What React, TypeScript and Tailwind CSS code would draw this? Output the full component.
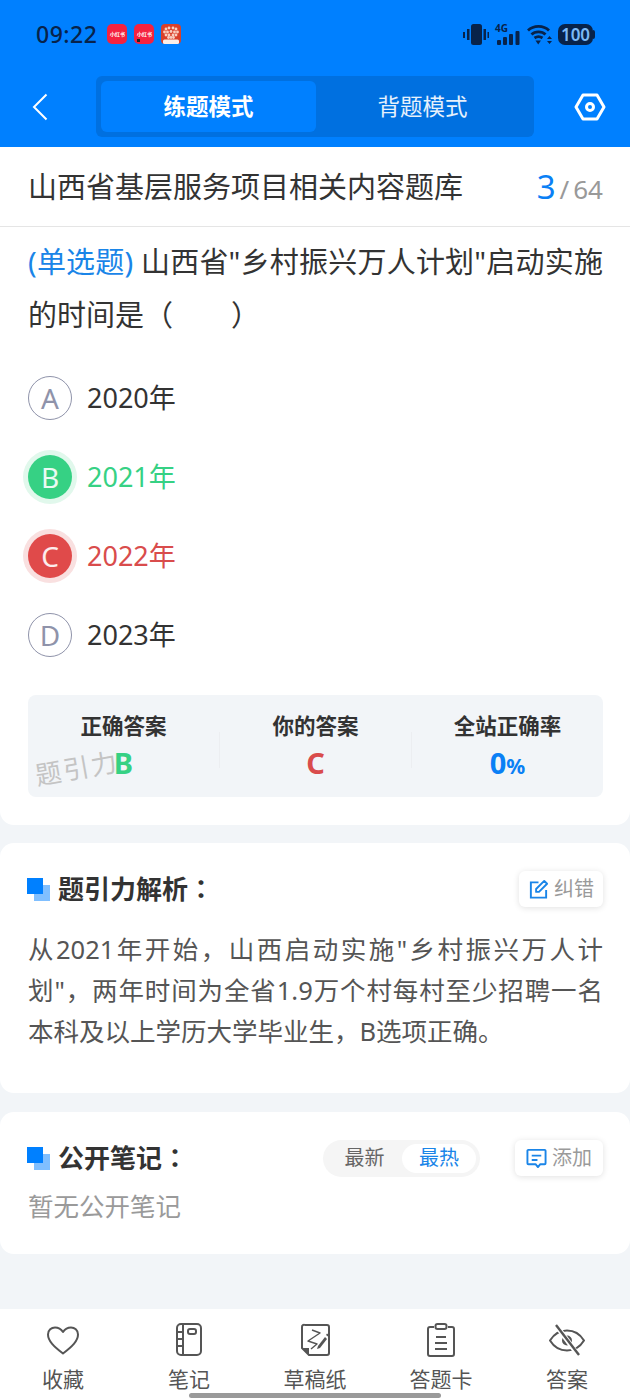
const FONT = "font-['Noto_Sans','Noto_Sans_CJK_SC',sans-serif]";

const OPTIONS = [
  { key: "A", text: "2020年", state: "normal" },
  { key: "B", text: "2021年", state: "right" },
  { key: "C", text: "2022年", state: "wrong" },
  { key: "D", text: "2023年", state: "normal" },
];

// dots of the little heart app icon
const HEART_DOTS = [
  [5, 5], [8, 4], [12, 4], [15, 5],
  [3.500, 8], [6.500, 8], [10, 7.500], [13.500, 8], [16.500, 8],
  [5, 11], [8, 11], [12, 11], [15, 11],
  [7.500, 13.500], [10, 13.500], [12.500, 13.500],
];

function StatusBar() {
  return (
    <div className="h-[68px] flex items-center pl-[36px] pr-[35px] text-[#08234a]">
      <span className="text-[23px] font-medium leading-none tracking-[0.5px]">09:22</span>
      <div className="ml-[10px] flex gap-[7px]">
        <div className="w-[20px] h-[20px] rounded-[5px] bg-[#f5223f] flex items-center justify-center">
          <span className="text-[5px] font-bold leading-none text-white whitespace-nowrap">小红书</span>
        </div>
        <div className="relative w-[20px] h-[20px] rounded-[5px] bg-[#f5223f] flex items-center justify-center">
          <span className="text-[5px] font-bold leading-none text-white whitespace-nowrap">小红书</span>
          <span className="absolute left-[3px] bottom-[2px] w-[3px] h-[3px] bg-[#222]" />
        </div>
        <svg width="20" height="20" viewBox="0 0 20 20">
          <rect width="20" height="20" rx="4" fill="#d9402a" />
          {HEART_DOTS.map(([x, y]) => (
            <circle key={`${x}-${y}`} cx={x} cy={y} r="1.400" fill="#f8cfc0" />
          ))}
          <rect x="2" y="15.500" width="16" height="4.500" rx="1.500" fill="#fbeee8" />
        </svg>
      </div>
      <div className="ml-auto flex items-center">
        <svg width="26" height="21" viewBox="0 0 26 21" fill="#08234a">
          <rect x="8" y="0" width="11" height="21" rx="2.500" />
          <rect x="0" y="8" width="2" height="6" />
          <rect x="4" y="5" width="2.500" height="11" />
          <rect x="20.500" y="5" width="2.500" height="11" />
          <rect x="24.500" y="8" width="1.500" height="6" />
        </svg>
        <div className="relative ml-[6px] w-[25px] h-[21px]">
          <span className="absolute left-0 top-[-2px] text-[10px] font-bold leading-[12px]">4G</span>
          <svg width="25" height="21" viewBox="0 0 25 21" fill="#08234a">
            <rect x="2" y="16" width="4" height="5" rx="1" />
            <rect x="8" y="13" width="4" height="8" rx="1" />
            <rect x="14" y="10" width="4" height="11" rx="1" />
            <rect x="20.500" y="7" width="4" height="14" rx="1" />
          </svg>
        </div>
        <svg className="ml-[7px]" width="25" height="21" viewBox="0 0 25 21" fill="none" stroke="#08234a" strokeWidth="2.800">
          <path d="M1 6.500C6.500 1 16.500 1 22 6.500" />
          <path d="M4.500 10.500C8 7 15 7 18.500 10.500" />
          <path d="M7.500 14C10 12.200 13 12.200 15.500 14" />
          <path d="M8.500 16.500h5.500L11.200 20.500z" fill="#08234a" stroke="none" />
          <path d="M20 15l2.500-3 2.500 3zM20 17l2.500 3 2.500-3z" fill="#08234a" stroke="none" />
        </svg>
        <div className="ml-[6px] flex items-center">
          <div className="w-[35px] h-[21px] rounded-[7px] bg-[#08234a] flex items-center justify-center text-[17px] font-semibold leading-none text-[#7cb9f5]">
            100
          </div>
          <div className="w-[2px] h-[9px] rounded-r-[2px] bg-[#08234a]" />
        </div>
      </div>
    </div>
  );
}

function NavBar() {
  return (
    <div className="h-[79px] flex items-start pt-[8px]">
      <div className="w-[96px] h-[61px] flex items-center pl-[32px]">
        <svg width="16" height="28" viewBox="0 0 16 28" fill="none" stroke="white" strokeWidth="2">
          <path d="M14.500 1.500L2 14l12.500 12.500" />
        </svg>
      </div>
      <div className="w-[438px] h-[61px] rounded-[6px] bg-[#0070e0] p-[5px] flex">
        <div className="w-[215px] h-[51px] rounded-[6px] bg-[#0080ff] flex items-center justify-center text-[22.500px] font-bold text-white">
          练题模式
        </div>
        <div className="flex-1 flex items-center justify-center text-[22.500px] text-white/90">背题模式</div>
      </div>
      <div className="flex-1 h-[61px] flex items-center justify-center pl-[16px]">
        <svg width="32" height="28" viewBox="0 0 32 28" fill="none" stroke="white" strokeWidth="3">
          <path d="M9 2h14l7 12-7 12H9L2 14z" strokeLinejoin="round" />
          <circle cx="16" cy="14" r="3.500" />
        </svg>
      </div>
    </div>
  );
}

function OptionRow({ opt }: { opt: (typeof OPTIONS)[number] }) {
  const badge =
    opt.state === "right"
      ? "bg-[#36d184] text-white/90 ring-[5px] ring-[#e1f8ec]"
      : opt.state === "wrong"
        ? "bg-[#e04a4a] text-white/90 ring-[5px] ring-[#f9e0e0]"
        : "border border-[#8f93aa] text-[#8f93aa]";
  const label =
    opt.state === "right" ? "text-[#36d184]" : opt.state === "wrong" ? "text-[#d94c4c]" : "text-[#333]";
  return (
    <div className="h-[79px] flex items-center">
      <div className={`w-[44px] h-[44px] rounded-full flex items-center justify-center text-[28px] leading-none ${badge}`}>
        {opt.key}
      </div>
      <span className={`ml-[15px] text-[27px] leading-none ${label}`}>{opt.text}</span>
    </div>
  );
}

function AnswerStats() {
  return (
    <div className="relative mt-[21px] h-[102px] rounded-[8px] bg-[#f2f5f8] flex items-start pt-[17px]">
      <div className="flex-1 flex flex-col items-center">
        <span className="text-[21.500px] font-bold leading-[28px] text-[#333]">正确答案</span>
        <span className="mt-[7px] text-[29px] font-bold leading-[32px] text-[#36d184]">B</span>
      </div>
      <div className="mt-[20px] w-px h-[36px] bg-[#eceef1]" />
      <div className="flex-1 flex flex-col items-center">
        <span className="text-[21.500px] font-bold leading-[28px] text-[#333]">你的答案</span>
        <span className="mt-[7px] text-[29px] font-bold leading-[32px] text-[#d94c4c]">C</span>
      </div>
      <div className="mt-[20px] w-px h-[36px] bg-[#eceef1]" />
      <div className="flex-1 flex flex-col items-center">
        <span className="text-[21.500px] font-bold leading-[28px] text-[#333]">全站正确率</span>
        <span className="mt-[7px] text-[29px] font-bold leading-[32px] text-[#0a80f5]">
          0<span className="text-[21px]">%</span>
        </span>
      </div>
      {/* watermark */}
      <span className="absolute left-[7px] top-[56px] -rotate-[10deg] text-[26px] leading-[34px] tracking-[2px] text-[#c4c4c4]">
        题引力
      </span>
    </div>
  );
}

function SectionTitle({ text }: { text: string }) {
  return (
    <>
      <div className="relative -ml-[1px] w-[23px] h-[23px] shrink-0">
        <div className="absolute right-0 bottom-0 w-[16px] h-[16px] bg-[#80bfff]" />
        <div className="absolute left-0 top-0 w-[16px] h-[16px] bg-[#0080ff]" />
      </div>
      <span className="ml-[8px] -mt-[2px] text-[26px] font-bold text-[#333]">
        {text}
        <span className="font-['Noto_Sans_CJK_TC',sans-serif]">：</span>
      </span>
    </>
  );
}

function Analysis() {
  return (
    <div className="mt-[18px] h-[250px] rounded-[14px] bg-white pl-[28px] pr-[27px] pt-[28px]">
      <div className="flex items-center h-[36px]">
        <SectionTitle text="题引力解析" />
        <div className="ml-auto w-[84px] h-[36px] rounded-[6px] bg-white shadow-[0_1px_6px_rgba(0,0,0,0.12)] flex items-center justify-center gap-[5px]">
          <svg width="21" height="21" viewBox="0 0 22 22" fill="none" stroke="#1a85e8" strokeWidth="2">
            <path d="M11 3.500H3v16h16v-8" />
            <path d="M8.500 13.500v-3L17 2l3 3-8.500 8.500z" strokeLinejoin="round" />
          </svg>
          <span className="text-[20px] leading-none text-[#9a9a9a]">纠错</span>
        </div>
      </div>
      <p className="mt-[22px] text-justify text-[25.500px] leading-[41px] text-[#555]">
        从2021年开始，山西启动实施"乡村振兴万人计划"，两年时间为全省1.9万个村每村至少招聘一名本科及以上学历大学毕业生，B选项正确。
      </p>
    </div>
  );
}

function PublicNotes() {
  return (
    <div className="mt-[19px] h-[142px] rounded-[14px] bg-white pl-[28px] pr-[27px] pt-[28px]">
      <div className="flex items-center h-[36px]">
        <SectionTitle text="公开笔记" />
        <div className="ml-auto w-[157px] h-[37px] rounded-full bg-[#f5f5f5] flex items-center p-[4px]">
          <span className="w-[75px] text-center text-[20px] leading-none text-[#666]">最新</span>
          <span className="w-[74px] h-[29px] rounded-full bg-white flex items-center justify-center text-[20px] leading-none text-[#1a85e8]">
            最热
          </span>
        </div>
        <div className="ml-[35px] w-[88px] h-[36px] rounded-[6px] bg-white shadow-[0_1px_6px_rgba(0,0,0,0.12)] flex items-center justify-center gap-[5px]">
          <svg width="21" height="21" viewBox="0 0 22 22" fill="none" stroke="#1a85e8" strokeWidth="2">
            <path d="M2.500 2h17a1 1 0 0 1 1 1v13a1 1 0 0 1-1 1H15l-2.500 3-2.500-3H2.500a1 1 0 0 1-1-1V3a1 1 0 0 1 1-1z" strokeLinejoin="round" />
            <path d="M6 8h10M6 12.500h6" />
          </svg>
          <span className="text-[20px] leading-none text-[#9a9a9a]">添加</span>
        </div>
      </div>
      <p className="mt-[12px] text-[25.500px] leading-[36px] text-[#9a9a9a]">暂无公开笔记</p>
    </div>
  );
}

function TabIcon({ name }: { name: string }) {
  const common = { width: 36, height: 34, viewBox: "0 0 36 34", fill: "none", stroke: "#555", strokeWidth: 2 };
  if (name === "heart") {
    return (
      <svg {...common}>
        <path d="M18 30.500C9 23.500 3 18 3 11.500 3 7 6.500 4.500 10 4.500c3.200 0 6 1.500 8 4.500 2-3 4.800-4.500 8-4.500 3.500 0 7 2.500 7 7 0 6.500-6 12-15 19z" strokeLinejoin="round" />
      </svg>
    );
  }
  if (name === "note") {
    return (
      <svg {...common}>
        <rect x="6" y="1" width="24" height="31" rx="4" />
        <path d="M12 1v31M6 9h6M6 16h6M6 23h6" />
        <rect x="17" y="6" width="8" height="5" rx="2" />
      </svg>
    );
  }
  if (name === "draft") {
    return (
      <svg {...common}>
        <path d="M8 2h22a2 2 0 0 1 2 2v26a2 2 0 0 1-2 2H12l-7-7V4a2 2 0 0 1 3-2z" strokeLinejoin="round" />
        <path d="M5 25h7v7z" fill="#555" stroke="none" />
        <path d="M15 7l8 3-12 8 9 3-6 5" strokeWidth="1.400" strokeLinejoin="round" />
        <path d="M21 23l-1 3 3-1 7-9-2-2z" fill="#555" stroke="none" />
        <path d="M29 12l1-1.500 2 1.500-1 1.500z" fill="#555" stroke="none" />
      </svg>
    );
  }
  if (name === "card") {
    return (
      <svg {...common}>
        <path d="M11 4H7a2 2 0 0 0-2 2v25a2 2 0 0 0 2 2h22a2 2 0 0 0 2-2V6a2 2 0 0 0-2-2h-4" />
        <rect x="12.500" y="1" width="11" height="5" rx="2" />
        <path d="M13 14h10M12 20h12M12 26h12" />
      </svg>
    );
  }
  return (
    <svg {...common}>
      <path d="M1 17.500C5 11 11 7.500 18 7.500s13 3.500 17 10c-4 6.500-10 10-17 10S5 24 1 17.500z" />
      <circle cx="18" cy="17.500" r="5" fill="#555" stroke="none" />
      <path d="M7 2l22 30" stroke="white" strokeWidth="5" />
      <path d="M7 2l23 30" strokeWidth="2.400" />
    </svg>
  );
}

const TABS = [
  { icon: "heart", label: "收藏" },
  { icon: "note", label: "笔记" },
  { icon: "draft", label: "草稿纸" },
  { icon: "card", label: "答题卡" },
  { icon: "eye", label: "答案" },
];

function TabBar() {
  return (
    <div className="relative h-[91px] bg-white flex pt-[14px]">
      {TABS.map((t) => (
        <div key={t.icon} className="w-[126px] flex flex-col items-center">
          <TabIcon name={t.icon} />
          <span className="mt-[8px] text-[21px] leading-[28px] text-[#555]">{t.label}</span>
        </div>
      ))}
      <div className="absolute left-[189px] top-[84px] w-[252px] h-[5px] rounded-full bg-[#9a9a9a]" />
    </div>
  );
}

export default function App() {
  return (
    <div className={`${FONT} w-[630px] h-[1400px] bg-[#f2f5f8] flex flex-col overflow-hidden`}>
      <div className="bg-[#0080ff]">
        <StatusBar />
        <NavBar />
      </div>

      <div className="h-[678px] rounded-b-[14px] bg-white">
        <div className="h-[80px] border-b border-[#e5e5e5] pl-[28px] pr-[27px] flex items-center justify-between">
          <span className="text-[29px] text-[#333]">山西省基层服务项目相关内容题库</span>
          <span className="flex items-baseline text-[#999]">
            <span className="text-[33px] leading-none text-[#0a80f5]">3</span>
            <span className="ml-[4px] text-[26px] leading-none">/</span>
            <span className="ml-[4px] text-[26px] leading-none">64</span>
          </span>
        </div>
        <div className="pl-[28px] pr-[27px]">
          <p className="mt-[8px] text-justify text-[29px] leading-[53px] text-[#333]">
            <span className="text-[#1a85e8]">(单选题)</span>{" "}
            山西省"乡村振兴万人计划"启动实施的时间是（　　）
          </p>
          <div className="mt-[17px]">
            {OPTIONS.map((o) => (
              <OptionRow key={o.key} opt={o} />
            ))}
          </div>
          <AnswerStats />
        </div>
      </div>

      <Analysis />
      <PublicNotes />
      <div className="flex-1" />
      <TabBar />
    </div>
  );
}
